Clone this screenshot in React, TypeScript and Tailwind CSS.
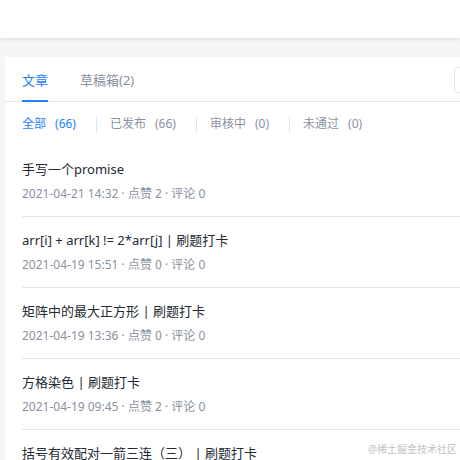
import React from 'react';

const font = { fontFamily: '"Noto Sans", "Noto Sans CJK SC", sans-serif' };

const filters = [
  { label: '全部', count: 66, active: true },
  { label: '已发布', count: 66 },
  { label: '审核中', count: 0 },
  { label: '未通过', count: 0 },
];

const posts = [
  { title: '手写一个promise', time: '2021-04-21 14:32', likes: 2, comments: 0 },
  { title: 'arr[i] + arr[k] != 2*arr[j] | 刷题打卡', time: '2021-04-19 15:51', likes: 0, comments: 0 },
  { title: '矩阵中的最大正方形 | 刷题打卡', time: '2021-04-19 13:36', likes: 0, comments: 0 },
  { title: '方格染色 | 刷题打卡', time: '2021-04-19 09:45', likes: 2, comments: 0 },
  { title: '括号有效配对一箭三连（三） | 刷题打卡', time: '2021-04-19 09:12', likes: 0, comments: 0 },
];

export default function App() {
  return (
    <div className="relative w-[460px] h-[460px] overflow-hidden bg-[#f4f5f5]" style={font}>
      {/* Top header */}
      <div className="h-[39px] bg-white shadow-[0_1px_2px_rgba(0,0,0,0.08)] border-b border-[#e8e8e8]" />

      {/* Card */}
      <div className="mt-[18px] ml-[5px] w-[700px] bg-white">
        {/* Tabs */}
        <div className="flex items-center h-[45px] px-[17px] border-b border-[#e4e6eb]">
          <div className="flex gap-[32px] h-full">
            <div className="relative flex items-center pt-[3px] text-[13px] text-[#1e80ff]">
              文章
              <div className="absolute left-0 right-0 bottom-[-1px] h-[2px] bg-[#1e80ff]" />
            </div>
            <div className="flex items-center pt-[3px] text-[13px] text-[#8a919f]">草稿箱(2)</div>
          </div>
          <div className="flex-1" />
          <div className="w-[235px] h-[26px] mr-[-1px] border border-[#e4e6eb] rounded-[3px] mb-[-2px]" />
        </div>

        {/* Filters */}
        <div className="flex items-center h-[44px] px-[17px] text-[12px]">
          {filters.map((f, i) => (
            <div key={f.label} className="flex items-center">
              {i > 0 && <div className="w-px h-[17px] bg-[#e4e6eb] ml-[20px] mr-[13px]" />}
              <div className={`flex items-center gap-[9px] ${f.active ? 'text-[#1e80ff]' : 'text-[#8a919f]'}`}>
                <span>{f.label}</span>
                <span>({f.count})</span>
              </div>
            </div>
          ))}
        </div>

        {/* List */}
        <div className="px-[17px]">
          {posts.map((p) => (
            <div key={p.title} className="py-[11px] border-b border-[#e4e6eb]">
              <div className="text-[13px] leading-[24px] text-[#252933]">{p.title}</div>
              <div className="mt-[2px] text-[12px] leading-[22px] text-[#8a919f]">
                {p.time} · 点赞 {p.likes} · 评论 {p.comments}
              </div>
            </div>
          ))}
        </div>
      </div>

      <div className="absolute right-[3px] bottom-[3px] text-[10px] text-[#c2c2c2]">@稀土掘金技术社区</div>
    </div>
  );
}
